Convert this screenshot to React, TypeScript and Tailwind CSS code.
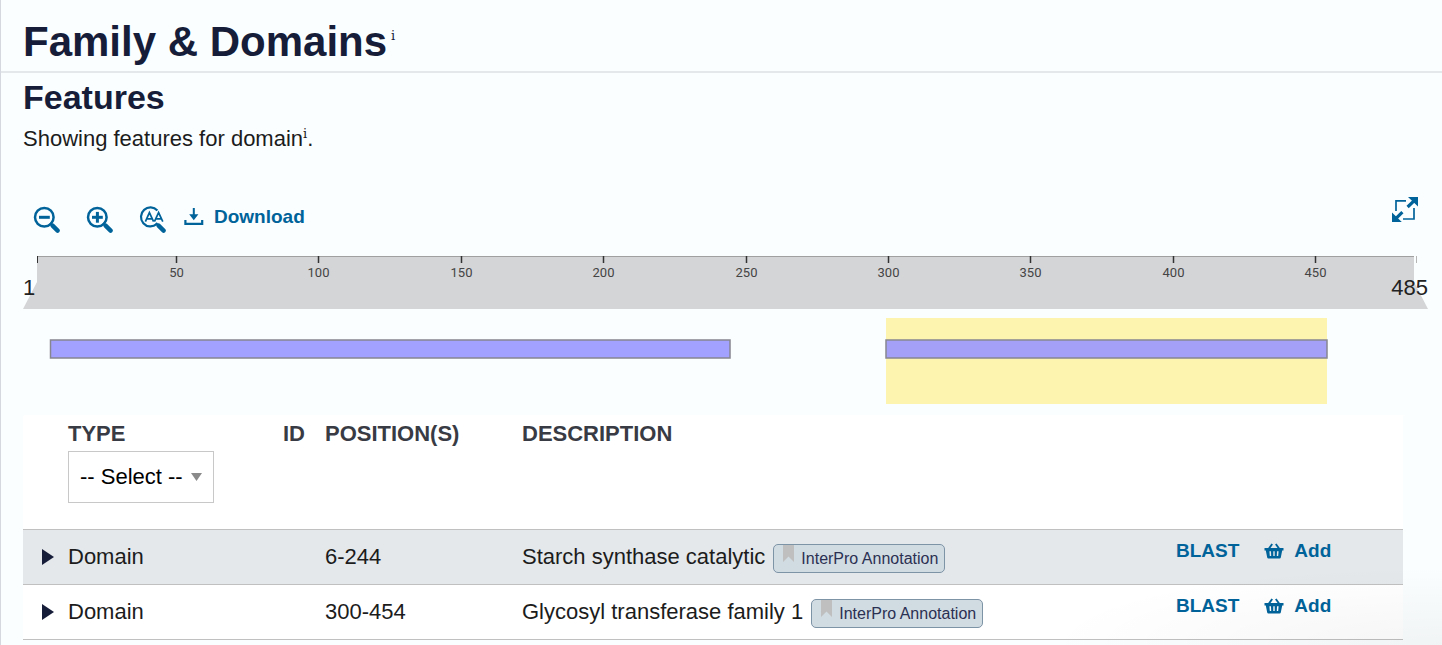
import React from "react";

type Feature = {
  id: string;
  type: string;
  positions: string;
  description: string;
  shaded: boolean;
};

const features: Feature[] = [
  { id: "starch", type: "Domain", positions: "6-244", description: "Starch synthase catalytic", shaded: true },
  { id: "glycosyl", type: "Domain", positions: "300-454", description: "Glycosyl transferase family 1", shaded: false },
];

const ticks = [50, 100, 150, 200, 250, 300, 350, 400, 450];

// Horizontal place of a residue in the track drawing
const toX = (residue: number) => Math.round(153 + (residue - 50) * 2.8475) + 0.5;

function Info({ className }: { className: string }) {
  return (
    <sup className={`font-['DejaVu_Serif',serif] text-[13px] font-normal leading-none ${className}`}>i</sup>
  );
}

function MagnifierIcon({ kind }: { kind: "out" | "in" | "text" }) {
  return (
    <svg viewBox="0 0 27 27" className="size-[27px]" fill="none" stroke="currentColor" aria-hidden="true">
      {kind === "text" ? (
        <path d="M18.4 4.4A9.5 9.5 0 1 0 17.6 18.2" strokeWidth="2.2" />
      ) : (
        <circle cx="11.3" cy="11.3" r="9.3" strokeWidth="2.5" />
      )}
      <path d="M17 17L19.4 19.4" strokeWidth="2" />
      <path d="M19.6 19.6L24.6 24.6" strokeWidth="4.4" strokeLinecap="round" />
      {kind !== "text" && <path d="M6 11.3H16.8" strokeWidth="3" />}
      {kind === "in" && <path d="M11.4 5.9V16.7" strokeWidth="3" />}
      {kind === "text" && (
        <path
          d="M6.4 15.6L10.4 6.6L14.6 15.6M7.8 12.8H13.2M15.4 15.6L19.6 6.6L23.8 15.6M17 12.8H22.2"
          strokeWidth="1.7"
        />
      )}
    </svg>
  );
}

function DownloadIcon() {
  return (
    <svg viewBox="0 0 20 18" className="h-[18px] w-5" fill="currentColor" aria-hidden="true">
      <path d="M8.8 0h2v6.2h3.6l-4.6 6-4.6-6h3.6z" />
      <path d="M0.3 12H2.5v2.8h14.6V12h2.2v5H0.3z" />
    </svg>
  );
}

function ExpandIcon() {
  return (
    <svg viewBox="0 0 26 25" className="h-[25px] w-[26px]" fill="none" stroke="currentColor" aria-hidden="true">
      <path d="M14 3.8H4V14M11 22H22V11" strokeWidth="1.7" />
      <path d="M15.6 10L22 3.8M10.4 15.2L4 21.4" strokeWidth="3.2" />
      <path d="M16 0H26V9.5ZM0 15.5V25H9.8Z" fill="currentColor" stroke="none" />
    </svg>
  );
}

function BasketIcon() {
  return (
    <svg viewBox="0 0 20 16" className="h-4 w-5" aria-hidden="true">
      <path d="M4.6 6L8.2 1M15.4 6L11.8 1" stroke="currentColor" strokeWidth="1.9" fill="none" />
      <path
        fillRule="evenodd"
        fill="currentColor"
        d="M0.5 5H19.5V7.6H18.2L16.8 14.4Q16.6 15.4 15.6 15.4H4.4Q3.4 15.4 3.2 14.4L1.8 7.6H0.5ZM5.4 8.2L5.8 13H7.2L7 8.2ZM9.3 8.2V13H10.7V8.2ZM13 8.2L12.8 13H14.2L14.6 8.2Z"
      />
    </svg>
  );
}

function Track() {
  return (
    <svg viewBox="0 0 1405 152" className="mt-[23px] block w-full" role="img" aria-label="Domain positions on a sequence of 485 residues">
      <path d="M14 1H1391V26L1405 53H0L14 26Z" fill="#d4d5d7" />
      <path d="M14 0.5H1391" stroke="#a0a0a0" />
      <path d="M14.5 0V7" stroke="#333" />
      <path d="M1393.5 0V7" stroke="#b5b5b5" />
      {ticks.map((tick) => (
        <g key={tick}>
          <path d={`M${toX(tick)} 0V7`} stroke="#333" strokeWidth="1.5" />
          <text x={toX(tick)} y="21" textAnchor="middle" fill="#444" className="font-[Roboto,sans-serif] text-[13px]">
            {tick}
          </text>
        </g>
      ))}
      <text x="0" y="39" fill="#222" className="text-[22px]">1</text>
      <text x="1405" y="39" textAnchor="end" fill="#222" className="text-[22px]">485</text>
      <rect x="863" y="62" width="441" height="86" fill="#fdf4b0" />
      <rect x="27.5" y="84" width="679.5" height="18" fill="#a3a1ff" stroke="#868690" strokeWidth="1.5" />
      <rect x="863" y="84" width="441" height="18" fill="#a4a0f8" stroke="#868690" strokeWidth="1.5" />
    </svg>
  );
}

function FeatureRow({ feature }: { feature: Feature }) {
  return (
    <tr className={feature.shaded ? "h-[55px] border-y border-[#c0c0c0] bg-[#e4e8eb]" : "h-[55px] border-y border-[#c0c0c0]"}>
      <td className="pl-[19px]">
        <button type="button" aria-label={`Expand ${feature.description}`} className="block text-[#161d39]">
          <svg viewBox="0 0 12 16" className="h-4 w-3" fill="currentColor" aria-hidden="true">
            <path d="M0 0L12 8L0 16Z" />
          </svg>
        </button>
      </td>
      <td>{feature.type}</td>
      <td />
      <td>{feature.positions}</td>
      <td>
        <div className="flex items-center gap-2">
          {feature.description}
          <span className="mt-1 flex h-[29px] items-start gap-[7px] rounded-[5px] border border-[#7d93a6] bg-[#d1dbe2] pr-[6px] pl-[9px] text-[16px] leading-[27px] text-[#2b3152]">
            <svg viewBox="0 0 11 17" className="h-[17px] w-[11px]" fill="#bfbfbf" aria-hidden="true">
              <path d="M0 0H11V17L5.5 11.5L0 17Z" />
            </svg>
            InterPro Annotation
          </span>
        </div>
      </td>
      <td>
        <div className="mb-3 flex items-center gap-[25px] text-[19px] font-bold text-[#00639a]">
          <button type="button">BLAST</button>
          <button type="button" className="flex items-center gap-[10px]">
            <BasketIcon />
            Add
          </button>
        </div>
      </td>
    </tr>
  );
}

export default function App() {
  return (
    <main className="relative min-h-screen border-l border-[#d5d8de] bg-[#fbfeff] font-['Liberation_Sans',Arial,sans-serif] text-[22px] leading-[26px] text-[#1c1c1c]">
      <h1 className="flex h-[73px] items-center border-b-2 border-[#e4e8eb] pt-[12px] pl-[22px] text-[42px] leading-[50px] font-bold text-[#161d39]">
        <span>
          Family &amp; Domains
          <Info className="ml-1 align-[9px]" />
        </span>
      </h1>
      <section className="pr-[14px] pl-[22px]">
        <h2 className="pt-1 text-[34px] leading-10 font-bold text-[#161d39]">Features</h2>
        <p className="mt-[9px]">
          Showing features for domain
          <Info className="align-[2px]" />.
        </p>
        <div className="mt-[45px] flex items-start justify-between px-[10px] text-[#00639a]">
          <div className="flex items-start">
            <button type="button" aria-label="Zoom out" className="mt-[9px]"><MagnifierIcon kind="out" /></button>
            <button type="button" aria-label="Zoom in" className="mt-[9px] ml-[26px]"><MagnifierIcon kind="in" /></button>
            <button type="button" aria-label="Zoom to sequence" className="mt-[9px] ml-[26px]"><MagnifierIcon kind="text" /></button>
            <button type="button" className="mt-[7px] ml-[18px] flex items-center gap-[10px] text-[19px] font-bold">
              <DownloadIcon />
              Download
            </button>
          </div>
          <button type="button" aria-label="Full screen"><ExpandIcon /></button>
        </div>
        <Track />
        <div className="mt-[7px] pr-[25px]">
          <table className="w-full table-fixed border-collapse bg-white text-left">
            <colgroup>
              <col className="w-[45px]" />
              <col className="w-[215px]" />
              <col className="w-[42px]" />
              <col className="w-[197px]" />
              <col />
              <col className="w-[227px]" />
            </colgroup>
            <thead>
              <tr className="h-[114px] align-top text-[#393b44]">
                <td />
                <th scope="col" className="pt-[6px]">
                  <label htmlFor="type-filter" className="block">TYPE</label>
                  <span className="relative mt-1 block w-[146px]">
                    <select
                      id="type-filter"
                      className="block h-[52px] w-full appearance-none border border-[#c8c8c8] bg-white pl-[11px] font-normal text-black"
                    >
                      <option>-- Select --</option>
                      <option>Domain</option>
                    </select>
                    <svg viewBox="0 0 11 8" className="pointer-events-none absolute top-[22px] right-3 h-2 w-[11px]" fill="#8a8a8a" aria-hidden="true">
                      <path d="M0 0H11L5.5 8Z" />
                    </svg>
                  </span>
                </th>
                <th scope="col" className="pt-[6px]">ID</th>
                <th scope="col" className="pt-[6px]">POSITION(S)</th>
                <th scope="col" className="pt-[6px]">DESCRIPTION</th>
                <td />
              </tr>
            </thead>
            <tbody>
              {features.map((feature) => (
                <FeatureRow key={feature.id} feature={feature} />
              ))}
            </tbody>
          </table>
        </div>
      </section>
      <div
        aria-hidden="true"
        className="pointer-events-none absolute right-0 bottom-0 h-[80px] w-[400px] bg-[radial-gradient(ellipse_at_bottom_right,rgba(0,0,0,0.04),transparent_70%)]"
      />
    </main>
  );
}
